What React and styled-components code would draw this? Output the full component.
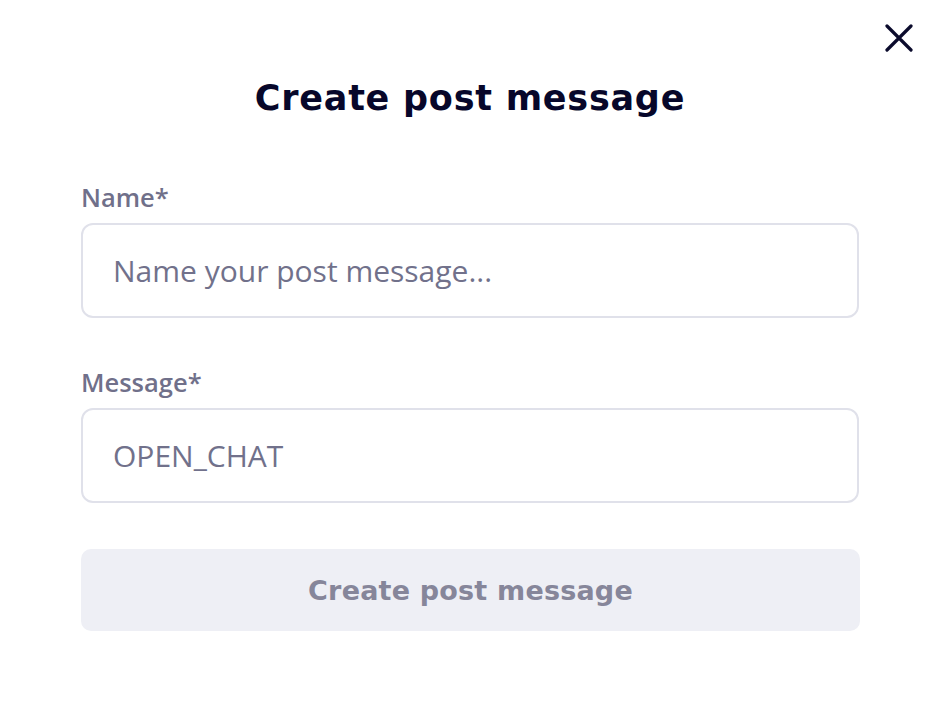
import React from "react";
import styled, { createGlobalStyle } from "styled-components";

const Global = createGlobalStyle`
  html, body { margin: 0; padding: 0; background: #ffffff; }
  * { box-sizing: border-box; }
`;

const Modal = styled.div`
  width: 934px;
  height: 706px;
  position: relative;
  background: #ffffff;
  padding: 74px 74px 0 81px;
  display: flex;
  flex-direction: column;
`;

const Close = styled.button`
  position: absolute;
  top: 23px;
  right: 20px;
  width: 30px;
  height: 30px;
  padding: 0;
  border: none;
  background: transparent;
  display: flex;
  align-items: center;
  justify-content: center;
`;

const Title = styled.h1`
  margin: 0 0 59px 0;
  text-align: center;
  width: 778px;
  font-family: "DejaVu Sans", sans-serif;
  font-weight: 700;
  font-size: 35px;
  line-height: 48px;
  letter-spacing: 0.75px;
  color: #07072a;
`;

const Field = styled.div`
  display: flex;
  flex-direction: column;
  width: 778px;
  margin-bottom: ${(p) => p.$mb}px;
`;

const Label = styled.label`
  font-family: "Open Sans", sans-serif;
  font-weight: 600;
  font-size: 25.5px;
  line-height: 32px;
  color: #70708a;
  margin-bottom: 10px;
`;

const Input = styled.div`
  height: 95px;
  border: 2px solid #e0e1ea;
  border-radius: 12px;
  padding: 0 30px;
  display: flex;
  align-items: center;
  font-family: "Open Sans", sans-serif;
  font-size: 30px;
  color: #71718b;
`;

const Button = styled.button`
  width: 779px;
  height: 82px;
  border: none;
  border-radius: 10px;
  background: #eeeff5;
  font-family: "DejaVu Sans", sans-serif;
  font-weight: 600;
  font-size: 27px;
  letter-spacing: 0.2px;
  color: #86869a;
  padding: 0;
`;

export default function App() {
  return (
    <>
      <Global />
      <Modal>
        <Close aria-label="Close">
          <svg width="28" height="28" viewBox="0 0 28 28">
            <path d="M2 2 L26 26 M26 2 L2 26" stroke="#0b0b2c" strokeWidth="3.2" strokeLinecap="round" />
          </svg>
        </Close>
        <Title>Create post message</Title>
        <Field $mb={48}>
          <Label>Name*</Label>
          <Input>Name your post message...</Input>
        </Field>
        <Field $mb={46}>
          <Label>Message*</Label>
          <Input>OPEN_CHAT</Input>
        </Field>
        <Button>Create post message</Button>
      </Modal>
    </>
  );
}
